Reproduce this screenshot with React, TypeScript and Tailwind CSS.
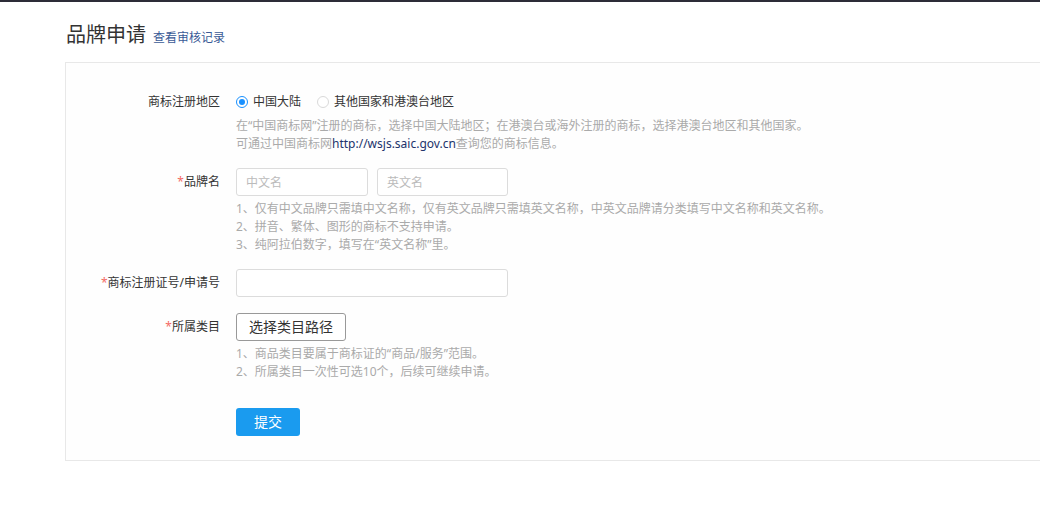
import React, {useState} from 'react';

const font = {fontFamily: '"Noto Sans", "Noto Sans CJK SC", sans-serif'};

function Label({text, required = false}: {text: string; required?: boolean}) {
  return (
    <div className="w-[154px] shrink-0 mr-4 text-right text-xs text-[#333] leading-7">
      {required && <span className="text-[#f46a64]">*</span>}
      {text}
    </div>
  );
}

function Help({lines}: {lines: React.ReactNode[]}) {
  return (
    <div className="text-xs text-[#aaa] leading-[18px]">
      {lines.map((l, i) => (
        <div key={i}>{l}</div>
      ))}
    </div>
  );
}

function Radio({checked, label, onClick}: {checked: boolean; label: string; onClick: () => void}) {
  return (
    <button type="button" onClick={onClick} className="flex items-center gap-[5px] mr-[16px] text-xs text-[#333]">
      <span
        className={
          checked
            ? 'w-3 h-3 rounded-full border border-[#1890ff] flex items-center justify-center'
            : 'w-3 h-3 rounded-full border border-[#d9d9d9] bg-white'
        }
      >
        {checked && <span className="w-[6px] h-[6px] rounded-full bg-[#1890ff]" />}
      </span>
      {label}
    </button>
  );
}

export default function App() {
  const [region, setRegion] = useState<'cn' | 'other'>('cn');

  return (
    <div className="min-h-[517px] bg-white" style={font}>
      <div className="h-[2px] bg-[#2d2c38]" />
      <div className="pl-[65px]">
        <div className="flex items-end h-[60px] pb-[13px] pl-px">
          <h1 className="text-xl leading-7 text-[#333]">品牌申请</h1>
          <a className="ml-[7px] mb-[3px] text-xs text-[#3a5a96]">查看审核记录</a>
        </div>

        <div className="border border-r-0 border-[#e8e8e8] bg-[#fefefe] pt-[30px] pb-6">
          {/* region */}
          <div className="flex">
            <div className="w-[154px] shrink-0 mr-4 text-right text-xs text-[#333] leading-[18px]">商标注册地区</div>
            <div>
              <div className="flex items-center h-[18px]">
                <Radio checked={region === 'cn'} label="中国大陆" onClick={() => setRegion('cn')} />
                <Radio checked={region === 'other'} label="其他国家和港澳台地区" onClick={() => setRegion('other')} />
              </div>
              <div className="mt-[6px]">
                <Help
                  lines={[
                    '在“中国商标网”注册的商标，选择中国大陆地区；在港澳台或海外注册的商标，选择港澳台地区和其他国家。',
                    <>
                      可通过中国商标网<span className="text-[#22336b]">http://wsjs.saic.gov.cn</span>查询您的商标信息。
                    </>,
                  ]}
                />
              </div>
            </div>
          </div>

          {/* brand name */}
          <div className="flex mt-[15px]">
            <Label text="品牌名" required />
            <div>
              <div className="flex gap-[9px]">
                <input
                  placeholder="中文名"
                  className="w-[132px] h-7 px-[9px] text-xs border border-[#dcdcdc] rounded-[3px] bg-white outline-none placeholder:text-[#bbb]"
                />
                <input
                  placeholder="英文名"
                  className="w-[131px] h-7 px-[9px] text-xs border border-[#dcdcdc] rounded-[3px] bg-white outline-none placeholder:text-[#bbb]"
                />
              </div>
              <div className="mt-1">
                <Help
                  lines={[
                    '1、仅有中文品牌只需填中文名称，仅有英文品牌只需填英文名称，中英文品牌请分类填写中文名称和英文名称。',
                    '2、拼音、繁体、图形的商标不支持申请。',
                    '3、纯阿拉伯数字，填写在“英文名称”里。',
                  ]}
                />
              </div>
            </div>
          </div>

          {/* registration no */}
          <div className="flex mt-[15px]">
            <Label text="商标注册证号/申请号" required />
            <input className="w-[272px] h-7 px-[9px] text-xs border border-[#dcdcdc] rounded-[3px] bg-white outline-none" />
          </div>

          {/* category */}
          <div className="flex mt-4">
            <Label text="所属类目" required />
            <div>
              <button
                type="button"
                className="w-[110px] h-7 text-sm text-[#333] border border-[#999] rounded-[3px] bg-white"
              >
                选择类目路径
              </button>
              <div className="mt-1">
                <Help
                  lines={[
                    '1、商品类目要属于商标证的“商品/服务”范围。',
                    '2、所属类目一次性可选10个，后续可继续申请。',
                  ]}
                />
              </div>
            </div>
          </div>

          {/* submit */}
          <div className="flex mt-[27px]">
            <div className="w-[154px] shrink-0 mr-4" />
            <button type="button" className="w-16 h-7 rounded-[3px] bg-[#1a9bef] text-sm text-white">
              提交
            </button>
          </div>
        </div>
      </div>
    </div>
  );
}
